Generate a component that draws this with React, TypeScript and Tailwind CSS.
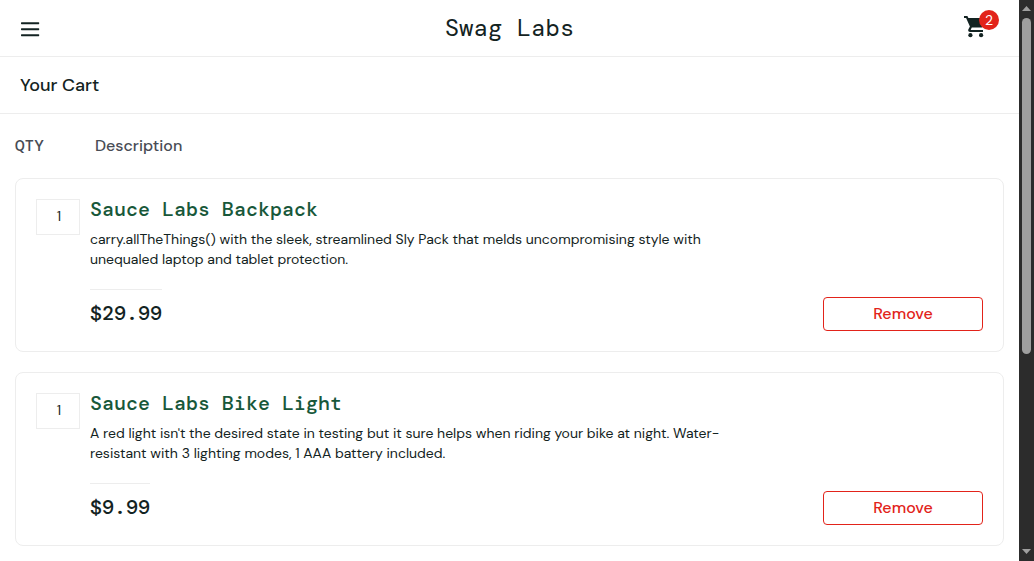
const items = [
  {
    name: "Sauce Labs Backpack",
    description:
      "carry.allTheThings() with the sleek, streamlined Sly Pack that melds uncompromising style with unequaled laptop and tablet protection.",
    price: "$29.99",
    quantity: 1,
  },
  {
    name: "Sauce Labs Bike Light",
    description:
      "A red light isn't the desired state in testing but it sure helps when riding your bike at night. Water-resistant with 3 lighting modes, 1 AAA battery included.",
    price: "$9.99",
    quantity: 1,
  },
];

function CartIcon() {
  return (
    <svg viewBox="0 0 24 24" className="size-6 fill-[#132322]">
      <path d="M1 2h3.400l1 2H21.500c.7 0 1 .6.8 1.200L19.500 12.700c-.3.6-.7.9-1.300.9H8.800l-1 1.800c-.1.300 0 .6.400.6H20v2H7.200c-1.600 0-2.500-1.500-1.800-2.800l1.500-2.600L3.100 4H1z" />
      <circle cx="7.400" cy="21.200" r="2.100" />
      <circle cx="18.100" cy="21.200" r="2.100" />
    </svg>
  );
}

function Header() {
  return (
    <header className="grid h-[57px] grid-cols-3 items-center border-b border-[#ededed] px-5">
      <button type="button" aria-label="Open Menu" className="justify-self-start">
        <svg viewBox="0 0 20 20" className="size-5 fill-[#132322]">
          <rect x="1" y="4.200" width="18.200" height="2" rx="0.6" />
          <rect x="1" y="10.200" width="18.200" height="2" rx="0.6" />
          <rect x="1" y="16.200" width="18.200" height="2" rx="0.6" />
        </svg>
      </button>
      <div className="justify-self-center font-['DM_Mono','Liberation_Mono',monospace] text-2xl">
        Swag Labs
      </div>
      <a href="#cart" aria-label="Shopping cart, 2 items" className="relative mr-3 mb-1 justify-self-end">
        <CartIcon />
        <span className="absolute -top-1 -right-3 flex size-5 items-center justify-center rounded-full bg-[#e2231a] text-sm text-white">
          2
        </span>
      </a>
    </header>
  );
}

function CartItem({ name, description, price, quantity }: (typeof items)[number]) {
  return (
    <li className="flex gap-2.5 rounded-lg border border-[#ededed] p-5">
      <div className="flex h-9 w-11 shrink-0 justify-center border border-[#ededed] pt-1.5 pl-0.5 text-sm">
        {quantity}
      </div>
      <div className="min-w-0 flex-1">
        <a
          href="#item"
          className="block font-['DM_Mono','Liberation_Mono',monospace] text-xl leading-5 font-medium text-[#18583a]"
        >
          {name}
        </a>
        <p className="mt-2.5 w-3/4 max-w-[640px] text-sm leading-5">{description}</p>
        <div className="mt-5 flex items-start justify-between">
          <div className="border-t border-[#ededed] pt-2 font-['DM_Mono','Liberation_Mono',monospace] text-xl leading-[30px] font-medium">
            {price}
          </div>
          <button
            type="button"
            className="mt-2 h-[34px] w-40 rounded border border-[#e2231a] text-base font-medium text-[#e2231a]"
          >
            Remove
          </button>
        </div>
      </div>
    </li>
  );
}

function ScrollTrack() {
  return (
    <div aria-hidden="true" className="flex w-[15px] shrink-0 flex-col items-center bg-[#2c2c2c]">
      <svg viewBox="0 0 15 18" className="h-[18px] w-[15px] shrink-0 fill-[#9f9f9f]">
        <path d="M7.5 6 12 11H3z" />
      </svg>
      <div className="w-full flex-1">
        <div className="mx-auto h-[64%] w-[9px] rounded-full bg-[#9f9f9f]" />
      </div>
      <svg viewBox="0 0 15 18" className="h-[18px] w-[15px] shrink-0 fill-[#9f9f9f]">
        <path d="M3 6h9l-4.500 5z" />
      </svg>
    </div>
  );
}

export default function App() {
  return (
    <div className="flex h-screen bg-white font-['DM_Sans','Inter',sans-serif] text-[#132322]">
      <div className="min-w-0 flex-1 overflow-hidden">
        <Header />
        <div className="flex h-[57px] items-center border-b border-[#ededed] px-5">
          <h1 className="text-lg font-medium">Your Cart</h1>
        </div>
        <main className="px-[15px] pt-5">
          <div className="mb-5 flex text-base font-medium text-[#484c55]">
            <span className="w-20 font-['DM_Mono','Liberation_Mono',monospace]">QTY</span>
            <span>Description</span>
          </div>
          <ul className="flex flex-col gap-5">
            {items.map((item) => (
              <CartItem key={item.name} {...item} />
            ))}
          </ul>
        </main>
      </div>
      <ScrollTrack />
    </div>
  );
}
